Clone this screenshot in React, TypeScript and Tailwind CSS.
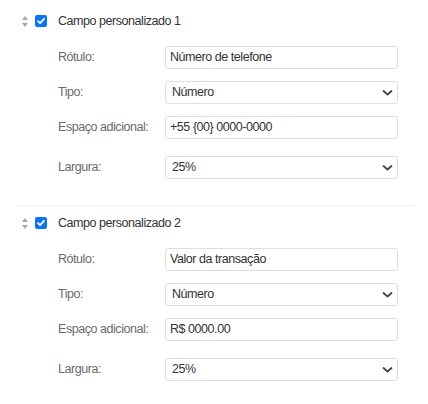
import React from "react";

function SortIcon() {
  return (
    <svg width="8" height="13" viewBox="0 0 8 13" className="shrink-0">
      <polygon points="1,5 4,1 7,5" fill="#a8a8a8" />
      <polygon points="1,8 4,12 7,8" fill="#a8a8a8" />
    </svg>
  );
}

function Check() {
  return (
    <div className="w-[12px] h-[12px] rounded-[2px] bg-[#0a75f0] flex items-center justify-center shrink-0">
      <svg width="10" height="10" viewBox="0 0 10 10">
        <path d="M2 5.2 L4.1 7.2 L8 2.8" stroke="#fff" strokeWidth="1.8" fill="none" strokeLinecap="round" strokeLinejoin="round" />
      </svg>
    </div>
  );
}

function Chevron() {
  return (
    <svg width="11" height="7" viewBox="0 0 11 7" className="absolute right-[4px] top-1/2 -translate-y-1/2">
      <path d="M1.5 1.5 L5.5 5 L9.5 1.5" stroke="#454545" strokeWidth="1.8" fill="none" strokeLinecap="round" strokeLinejoin="round" />
    </svg>
  );
}

function Row({ label, value, select, extra }: { label: string; value: string; select?: boolean; extra?: string }) {
  return (
    <div className={`flex items-center ${extra ?? ""}`}>
      <div className="w-[107px] text-[#6a6a6a]">{label}</div>
      <div className={`relative w-[233px] h-[23px] border border-[#dedede] rounded-[3px] bg-white flex items-center text-[#333] ${select ? "pl-[6px]" : "pl-[4px]"}`}>
        {value}
        {select && <Chevron />}
      </div>
    </div>
  );
}

function Block({ title, label, placeholder, pt, pb }: { title: string; label: string; placeholder: string; pt: string; pb: string }) {
  return (
    <div className={`${pt} ${pb}`}>
      <div className="flex items-center h-[20px]">
        <div className="w-[5px]" />
        <SortIcon />
        <div className="w-[6px]" />
        <Check />
        <div className="w-[11px]" />
        <div className="text-[#333]">{title}</div>
      </div>
      <div className="pl-[42px] mt-[15px]">
        <Row label="Rótulo:" value={label} />
        <Row label="Tipo:" value="Número" select extra="mt-[12px]" />
        <Row label="Espaço adicional:" value={placeholder} extra="mt-[12px]" />
        <Row label="Largura:" value="25%" select extra="mt-[17px]" />
      </div>
    </div>
  );
}

export default function App() {
  return (
    <div
      className="w-[428px] h-[404px] bg-white overflow-hidden text-[12.5px] tracking-[-0.45px]"
      style={{ fontFamily: '"Liberation Sans", Arial, sans-serif' }}
    >
      <div className="ml-[16px] w-[399px]">
        <Block title="Campo personalizado 1" label="Número de telefone" placeholder="+55 {00} 0000-0000" pt="pt-[11px]" pb="pb-[26px]" />
        <div className="h-[1px] bg-[#efefef]" />
        <Block title="Campo personalizado 2" label="Valor da transação" placeholder="R$ 0000.00" pt="pt-[7px]" pb="pb-[10px]" />
      </div>
    </div>
  );
}
